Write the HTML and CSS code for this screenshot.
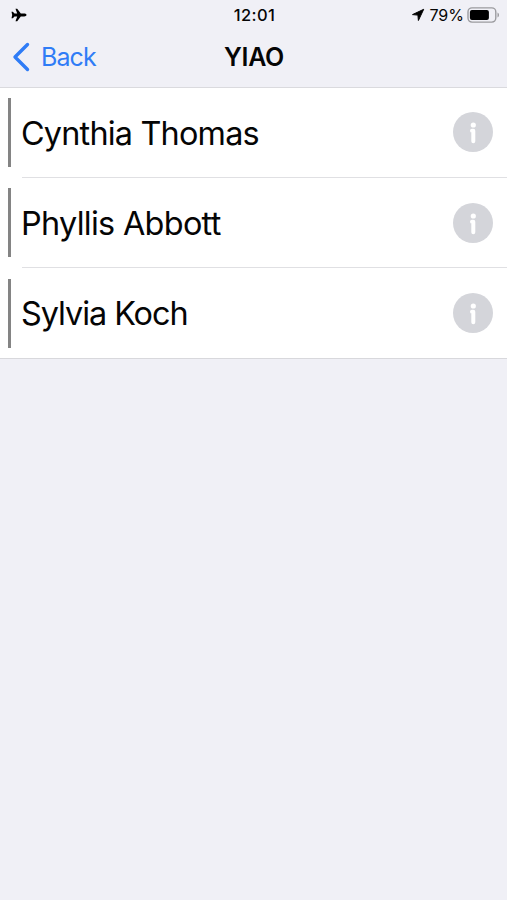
FILE: index.html
```html
<!DOCTYPE html>
<html lang="en">
<head>
<meta charset="utf-8">
<title>YIAO</title>
<link rel="stylesheet" href="styles.css">
</head>
<body>
<header class="header">
  <div class="status">
    <svg class="plane" width="16" height="14" viewBox="0 0 16 14"><path d="M15.500 7c0-.8-1-1.400-2.300-1.400H9.800L6.200.7H4.500L6.200 5.600H3.500L1.800 3.700H.5L1.200 7 .5 10.300h1.300l1.700-1.900h2.700L4.500 13.300h1.700l3.600-4.900h3.400c1.300 0 2.300-.6 2.300-1.400z"/></svg>
    <time class="clock">12:01</time>
    <div class="power">
      <svg class="arrow" width="14" height="14" viewBox="0 0 14 14"><path d="M12.700 1.300 1.500 6.600l5.400.5.500 5.400z" stroke="#050505" stroke-width="1" stroke-linejoin="round"/></svg>
      <span class="percent">79%</span>
      <svg class="battery" width="33" height="16" viewBox="0 0 33 16"><rect x="1" y=".9" width="27.800" height="14.200" rx="4" fill="none" stroke="#9b9b9f" stroke-width="1.400"/><rect x="2.900" y="2.900" width="19" height="10.200" rx="2"/><path d="M30.500 5.500c2 .8 2 4.200 0 5z" fill="#9b9b9f"/></svg>
    </div>
  </div>
  <nav class="nav">
    <a class="back"><svg width="18" height="30" viewBox="0 0 18 30"><path d="M15.500 2.500 3 15l12.500 12.500" fill="none" stroke="#2f7cf6" stroke-width="3.400" stroke-linecap="round" stroke-linejoin="round"/></svg><span class="back-label">Back</span></a>
    <h1 class="title">YIAO</h1>
  </nav>
</header>
<main class="list">
  <div class="row"><span class="bar"></span><div class="content"><span class="name n1">Cynthia Thomas</span><svg class="info" viewBox="0 0 40 40"><circle cx="20" cy="20" r="20"/><path d="M19 18.700h1.300v10.500" fill="none" stroke="#fff" stroke-width="4" stroke-linecap="round" stroke-linejoin="round"/><circle cx="20.300" cy="13" r="2.600" class="dot"/></svg></div></div>
  <div class="row"><span class="bar"></span><div class="content"><span class="name n2">Phyllis Abbott</span><svg class="info" viewBox="0 0 40 40"><circle cx="20" cy="20" r="20"/><path d="M19 18.700h1.300v10.500" fill="none" stroke="#fff" stroke-width="4" stroke-linecap="round" stroke-linejoin="round"/><circle cx="20.300" cy="13" r="2.600" class="dot"/></svg></div></div>
  <div class="row"><span class="bar"></span><div class="content"><span class="name n3">Sylvia Koch</span><svg class="info" viewBox="0 0 40 40"><circle cx="20" cy="20" r="20"/><path d="M19 18.700h1.300v10.500" fill="none" stroke="#fff" stroke-width="4" stroke-linecap="round" stroke-linejoin="round"/><circle cx="20.300" cy="13" r="2.600" class="dot"/></svg></div></div>
</main>
</body>
</html>
```
FILE: styles.css
```css
* { box-sizing: border-box; }
body { margin: 0; min-height: 100vh; background: #f0f0f6; color: #050505; font-family: Inter, sans-serif; }
.header { height: 88px; border-bottom: 1px solid #dadade; }
.status { height: 29px; display: grid; grid-template-columns: 1fr auto 1fr; align-items: center; padding: 0 7px 0 11px; }
.clock { font-size: 16.5px; font-weight: 500; letter-spacing: .4px; margin-right: 2px; }
.power { display: flex; align-items: center; justify-content: flex-end; }
.percent { font-size: 16px; margin: 0 3px 0 4px; }
.nav { height: 56px; display: grid; grid-template-columns: 1fr auto 1fr; align-items: center; padding: 0 12px; }
.back { display: flex; align-items: center; gap: 11px; color: #2f7cf6; font-size: 25px; letter-spacing: -.9px; }
.title { margin: 0 0 0 1px; font-size: 25px; font-weight: 600; letter-spacing: -.3px; }
.list { background: #fff; border-bottom: 1px solid #d8d8dc; }
.row { height: 90px; display: flex; align-items: center; padding-left: 8px; }
.bar { width: 3px; height: 69px; margin-bottom: 2px; background: #848484; }
.row:last-child .bar { margin-bottom: 0; }
.content { flex: 1; height: 90px; margin-left: 11px; padding-right: 14px; display: flex; align-items: center; justify-content: space-between; border-bottom: 1px solid #e0e0e3; }
.row:last-child .content { border-bottom: 0; }
.name { margin-left: -1px; padding-top: 1px; font-size: 32.4px; white-space: nowrap; }
.row:last-child .name { padding-top: 0; }
.n1 { letter-spacing: -.8px; }
.n2 { letter-spacing: -.69px; }
.n3 { letter-spacing: -1.05px; }
.info { width: 40px; height: 40px; margin-bottom: 1px; fill: #d4d5da; }
.row + .row .info { margin-bottom: 0; }
.dot { fill: #fff; }
```
